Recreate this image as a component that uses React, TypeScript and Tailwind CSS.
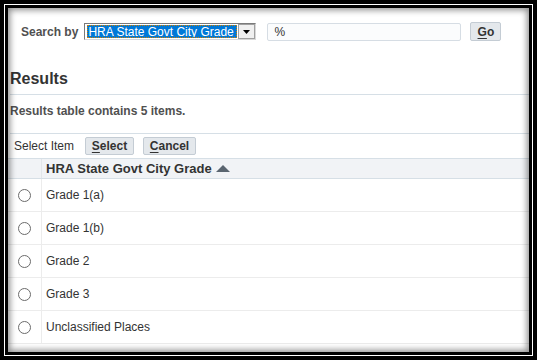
import React from 'react';

const rows = ['Grade 1(a)', 'Grade 1(b)', 'Grade 2', 'Grade 3', 'Unclassified Places'];

const Button: React.FC<{ label: string; className?: string }> = ({ label, className = '' }) => (
  <button
    className={`h-[18px] rounded-[2px] border border-[#c4ccd4] bg-[#e4e8ec] text-[12px] font-bold leading-none text-[#333] ${className}`}
  >
    <span className="underline underline-offset-2">{label[0]}</span>
    {label.slice(1)}
  </button>
);

const Radio = () => (
  <span className="block h-[13px] w-[13px] rounded-full border border-[#6b6b6b] bg-white" />
);

export default function App() {
  return (
    <div className="h-[360px] w-[537px] bg-black p-[4px] font-['Liberation_Sans',Arial,sans-serif]">
      <div className="h-full w-full bg-white p-[1px]">
        <div className="h-full w-full bg-black p-[3px]">
          <div className="relative h-full w-full overflow-hidden bg-white">
            {/* search row */}
            <div className="flex items-center pl-[13px] pt-[14px]">
              <span className="text-[12px] font-bold text-[#505050]">Search by</span>
              <div className="ml-[6px] flex h-[17px] w-[172px] items-center border border-[#7a7a7a] border-b-[#d8d8d8] border-r-[#d8d8d8] bg-white pl-[2px]">
                <div className="flex h-[13px] flex-1 items-center overflow-hidden whitespace-nowrap border border-dotted border-[#d08000] bg-[#0078d7] text-[12px] leading-none text-white">
                  HRA State Govt City Grade
                </div>
                <div className="ml-[1px] flex h-[15px] w-[17px] items-center justify-center border border-[#a0a0a0] bg-[#f0f0f0]">
                  <svg width="7" height="4" viewBox="0 0 7 4">
                    <path d="M0 0h7L3.5 4z" fill="#000" />
                  </svg>
                </div>
              </div>
              <div className="ml-[11px] flex h-[18px] w-[194px] items-center rounded-[2px] border border-[#d6dde4] bg-[#fbfcfd] pl-[6px] text-[12px] text-[#333]">
                %
              </div>
              <Button label="Go" className="ml-[9px] h-[19px] w-[31px]" />
            </div>

            {/* results heading */}
            <div className="ml-[2px] mt-[28px] border-b border-[#d6dfe6] pb-[6px]">
              <h2 className="text-[16px] font-bold leading-[19px] text-[#333]">Results</h2>
            </div>
            <div className="ml-[2px] border-b border-[#d6dfe6] pb-[14px] pt-[9px] text-[12px] font-bold leading-[15px] text-[#505050]">
              Results table contains 5 items.
            </div>

            {/* select toolbar */}
            <div className="flex items-center pl-[6px] pt-[3px]">
              <span className="text-[12px] text-[#333]">Select Item</span>
              <Button label="Select" className="ml-[11px] w-[49px]" />
              <Button label="Cancel" className="ml-[9px] w-[53px]" />
            </div>

            {/* table */}
            <div className="mt-[3px]">
              <div className="flex h-[21px] border-y border-[#d6dfe6] bg-[#f1f3f6]">
                <div className="w-[34px] border-r border-[#e2e6ea]" />
                <div className="flex items-center pl-[4px] text-[13px] font-bold text-[#333]">
                  HRA State Govt City Grade
                  <svg className="ml-[4px]" width="14" height="7" viewBox="0 0 14 7">
                    <path d="M0 7L7 0l7 7z" fill="#5a6570" />
                  </svg>
                </div>
              </div>
              {rows.map((r) => (
                <div key={r} className="flex h-[33px] border-b border-[#ececec]">
                  <div className="flex w-[34px] items-center justify-center border-r border-[#ececec]">
                    <Radio />
                  </div>
                  <div className="flex items-center pl-[4px] text-[12px] text-[#333]">{r}</div>
                </div>
              ))}
            </div>

            {/* frame shading */}
            <div className="pointer-events-none absolute inset-0 shadow-[inset_0_0_6px_2px_rgba(0,0,0,0.45)]" />
          </div>
        </div>
      </div>
    </div>
  );
}
